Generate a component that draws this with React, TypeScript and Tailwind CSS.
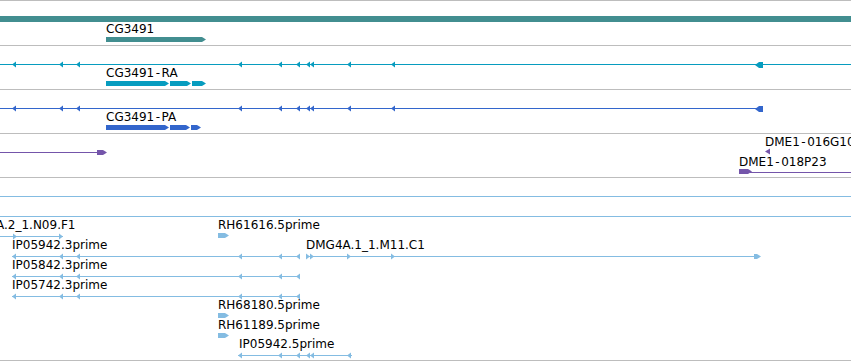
import React from 'react'

const GRAY = '#bdbdbd'
const TEAL = '#428e90'
const CYAN = '#079cbf'
const BLUE = '#3366cc'
const PURPLE = '#7455aa'
const LIGHT = '#84bce2'

// tip x positions of the intron direction marks
const TICKS = [12, 59, 76, 238, 278, 296, 306, 310, 347, 391]

function HLine({ x1, x2, y, c }: { x1: number; x2: number; y: number; c: string }) {
  return <rect x={x1} y={y} width={x2 - x1} height={1} fill={c} shapeRendering="crispEdges" />
}

function LTick({ x, y, c }: { x: number; y: number; c: string }) {
  return <polygon points={`${x},${y + 0.5} ${x + 4},${y - 2.5} ${x + 4},${y + 3.5}`} fill={c} />
}

function RTick({ x, y, c }: { x: number; y: number; c: string }) {
  return <polygon points={`${x},${y + 0.5} ${x - 4},${y - 2.5} ${x - 4},${y + 3.5}`} fill={c} />
}

function Block({
  x1,
  x2,
  y,
  h = 5,
  c,
  dir = 'right'
}: {
  x1: number
  x2: number
  y: number
  h?: number
  c: string
  dir?: 'right' | 'left'
}) {
  const m = y + h / 2
  const pts =
    dir === 'right'
      ? `${x1},${y} ${x2 - 4},${y} ${x2},${m} ${x2 - 4},${y + h} ${x1},${y + h}`
      : `${x1},${m} ${x1 + 4},${y} ${x2},${y} ${x2},${y + h} ${x1 + 4},${y + h}`
  return <polygon points={pts} fill={c} />
}

function Label({ x, y, children }: { x: number; y: number; children: string }) {
  const i = children.indexOf('-')
  if (i < 0) {
    return (
      <text x={x} y={y} fill="#000">
        {children}
      </text>
    )
  }
  return (
    <text x={x} y={y} fill="#000">
      <tspan>{children.slice(0, i)}</tspan>
      <tspan dx={1.5}>-</tspan>
      <tspan dx={1.5}>{children.slice(i + 1)}</tspan>
    </text>
  )
}

function Track({
  top,
  height,
  children
}: {
  top: number
  height: number
  children: React.ReactNode
}) {
  return (
    <div className="border-b border-[#bdbdbd]" style={{ height }}>
      <svg width={851} height={height - 1} viewBox={`0 ${top} 851 ${height - 1}`} className="block">
        {children}
      </svg>
    </div>
  )
}

function Transcript({ y, c, end, label, exons }: { y: number; c: string; end: number; label: string; exons: [number, number][] }) {
  return (
    <>
      <HLine x1={0} x2={end} y={y} c={c} />
      {TICKS.map((t) => (
        <LTick key={t} x={t} y={y} c={c} />
      ))}
      <Block x1={755} x2={763} y={y - 2} h={6} c={c} dir="left" />
      <Label x={106} y={y + 13}>{label}</Label>
      {exons.map(([a, b]) => (
        <Block key={a} x1={a} x2={b} y={y + 17} c={c} />
      ))}
    </>
  )
}

function Est3({ y, label }: { y: number; label: string }) {
  return (
    <>
      <Label x={12} y={y - 7}>{label}</Label>
      <HLine x1={12} x2={300} y={y} c={LIGHT} />
      {[12, 59, 76, 238, 278, 296].map((t) => (
        <LTick key={t} x={t} y={y} c={LIGHT} />
      ))}
    </>
  )
}

export default function App() {
  return (
    <div className="w-[851px] h-[361px] overflow-hidden bg-white border-t border-[#bdbdbd] font-['DejaVu_Sans',sans-serif] text-[12px]">
      <Track top={1} height={45}>
        <rect x={0} y={16} width={851} height={6} fill={TEAL} />
        <Label x={106} y={33}>CG3491</Label>
        <Block x1={106} x2={206} y={37} c={TEAL} />
      </Track>

      <Track top={46} height={44}>
        <Transcript
          y={64}
          c={CYAN}
          end={851}
          label="CG3491-RA"
          exons={[
            [106, 169],
            [170, 191],
            [192, 206]
          ]}
        />
      </Track>

      <Track top={90} height={44}>
        <Transcript
          y={108}
          c={BLUE}
          end={759}
          label="CG3491-PA"
          exons={[
            [106, 169],
            [170, 190],
            [191, 201]
          ]}
        />
      </Track>

      <Track top={134} height={44}>
        <HLine x1={0} x2={100} y={152} c={PURPLE} />
        <Block x1={97} x2={107} y={150} c={PURPLE} />
        <Label x={765} y={146}>DME1-016G10</Label>
        <polygon points="765,151.5 770,148.5 770,154.5" fill={PURPLE} />
        <Label x={739} y={166}>DME1-018P23</Label>
        <Block x1={739} x2={752} y={169} c={PURPLE} />
        <HLine x1={750} x2={851} y={172} c={PURPLE} />
      </Track>

      <Track top={178} height={183}>
        <HLine x1={0} x2={851} y={196} c={LIGHT} />
        <HLine x1={0} x2={851} y={216} c={LIGHT} />

        <Label x={-4} y={229}>A.2_1.N09.F1</Label>
        <HLine x1={0} x2={63} y={236} c={LIGHT} />
        <RTick x={17} y={236} c={LIGHT} />
        <RTick x={63} y={236} c={LIGHT} />

        <Label x={218} y={229}>RH61616.5prime</Label>
        <Block x1={218} x2={229} y={233} c={LIGHT} />

        <Est3 y={256} label="IP05942.3prime" />
        <Label x={306} y={249}>DMG4A.1_1.M11.C1</Label>
        <HLine x1={306} x2={760} y={256} c={LIGHT} />
        {[310, 314, 351, 395].map((t) => (
          <RTick key={t} x={t} y={256} c={LIGHT} />
        ))}
        <Block x1={754} x2={761} y={254} h={5} c={LIGHT} />

        <Est3 y={276} label="IP05842.3prime" />
        <Est3 y={296} label="IP05742.3prime" />

        <Label x={218} y={309}>RH68180.5prime</Label>
        <Block x1={218} x2={229} y={313} c={LIGHT} />
        <Label x={218} y={329}>RH61189.5prime</Label>
        <Block x1={218} x2={229} y={333} c={LIGHT} />

        <Label x={239} y={348}>IP05942.5prime</Label>
        <HLine x1={238} x2={352} y={355} c={LIGHT} />
        {[238, 278, 296, 306, 310, 347].map((t) => (
          <LTick key={t} x={t} y={355} c={LIGHT} />
        ))}
      </Track>
    </div>
  )
}
